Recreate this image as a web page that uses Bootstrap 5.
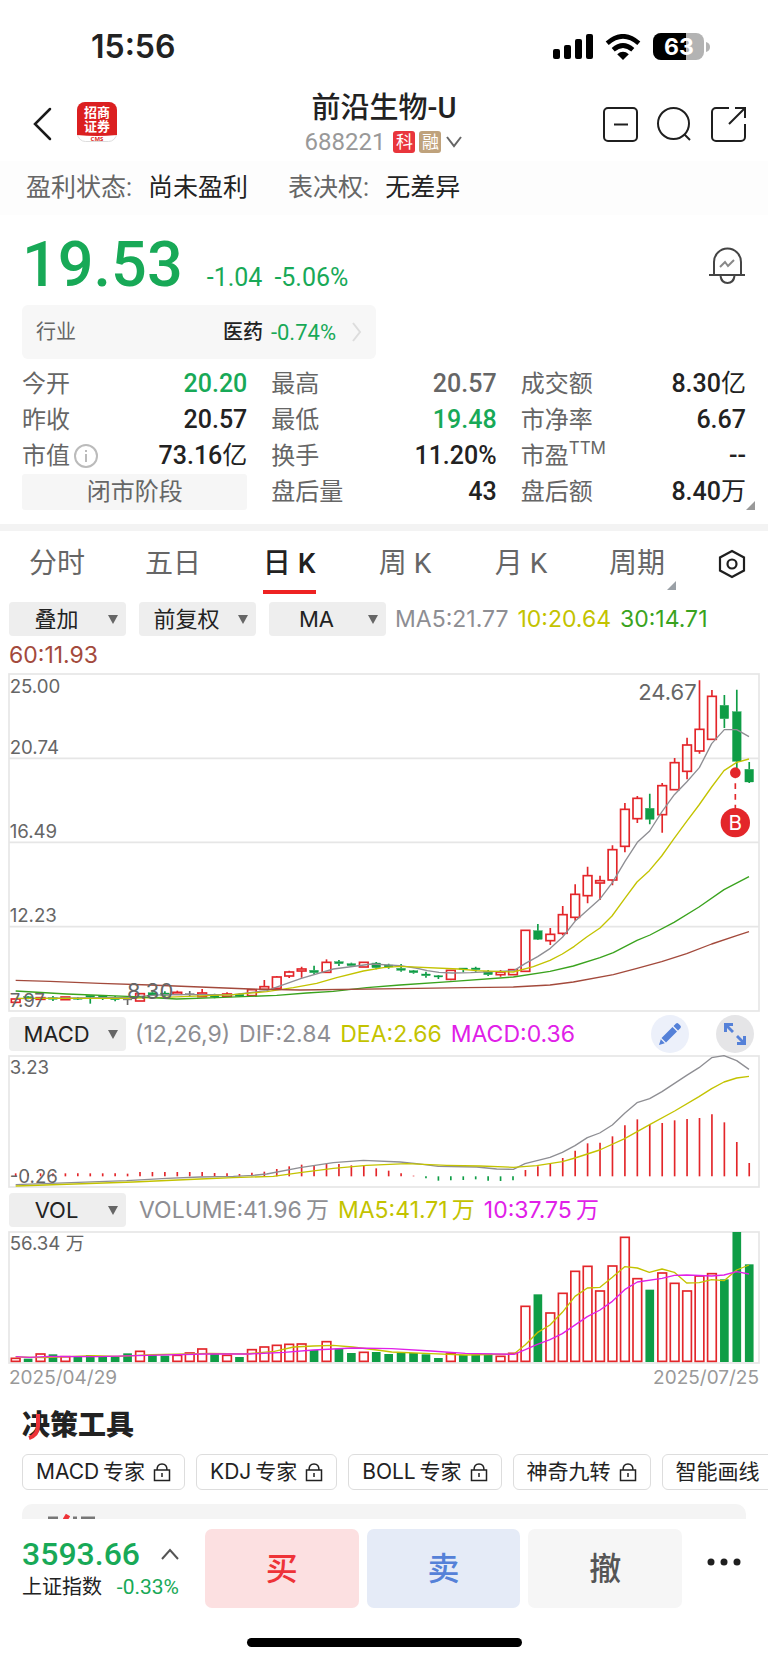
<!DOCTYPE html>
<html lang="zh-CN">
<head>
<meta charset="utf-8">
<meta name="viewport" content="width=device-width, initial-scale=1">
<title>前沿生物-U 688221</title>
<link href="https://cdn.jsdelivr.net/npm/bootstrap@5.3.0/dist/css/bootstrap.min.css" rel="stylesheet">
<style>
  :root { --up:#e3262a; --down:#0f9d46; --fall:#18a957; --ink:#222; --dim:#666; --soft:#999; --avg5:#8e8e93; --avg10:#c3c300; --avg30:#3aa31e; --avg60:#a34a3c; --pink:#e020e8; }
  body { font-family:Roboto,"Noto Sans CJK SC",sans-serif; color:var(--ink); background:#fff; overflow-x:hidden; }
  .btn-plain { background:none; border:0; padding:0; color:inherit; line-height:0; }
  .c-fall { color:var(--fall); } .c-dim { color:var(--dim); } .c-soft { color:var(--soft); }
  .fig { font-family:Inter,"Noto Sans CJK SC",sans-serif; }
  .side-pad { padding-left:22px; padding-right:22px; }

  .statusbar { height:87px; padding:6px 57px 0 91px; }
  .status-icons { gap:12px; }
  .clock { font:600 32px/40px Inter,sans-serif; }
  .topbar { height:74px; }
  .topside { flex:1; }
  .topside .brand { margin:-4px 0 0 21px; }
  .topside.actions { gap:18px; }
  .stock-name { font-size:29px; line-height:34px; font-weight:500; margin:0; padding-top:1px; }
  .stock-code { font-size:24px; line-height:34px; }
  .tag { width:22px; height:22px; line-height:22px; font-size:17px; border-radius:3px; color:#fff; text-align:center; }
  .tag-star { background:#e9353c; } .tag-margin { background:#bfa27c; }
  .notice { font-size:25px; line-height:54px; padding:0 26px; gap:40px; background:#fdfdfd; }
  .notice dt { font-weight:400; color:var(--dim); margin-right:16px; } .notice dd { margin:0; }

  .quote { padding-top:18px; padding-bottom:8px; }
  .price { font-size:63px; line-height:64px; font-weight:500; }
  .delta { font-size:25px; }
  .delta + .delta { margin-left:12px; }
  .sector { width:354px; max-width:100%; height:54px; padding:0 14px; background:#f7f7f7; border-radius:6px; font-size:20px; color:inherit; text-decoration:none; }
  .sector .pct { font-size:22px; margin:0 12px 0 8px; }
  .stats { display:grid; grid-template-columns:repeat(3,1fr); grid-auto-rows:36px; column-gap:24px; margin:7px 0 14px; font-size:24px; line-height:36px; position:relative; }
  .stats dt { font-weight:400; color:var(--dim); } .stats dd { margin:0; font-weight:500; font-size:25px; line-height:36px; }
  .stats sup { font-size:17px; top:-10px; }
  .info-mark { vertical-align:-4px; }
  .phase { background:#f6f6f6; border-radius:3px; color:var(--dim); text-align:center; }
  .corner { position:absolute; right:-9px; bottom:0; }
  .divider { height:7px; background:#f3f3f3; }

  .period { display:grid; grid-template-columns:repeat(6,116fr) 72fr; height:70px; }
  .period a { font-size:28px; line-height:66px; color:var(--dim); text-decoration:none; text-align:center; position:relative; padding-right:2px; }
  .period a.active { color:var(--ink); font-weight:500; }
  .period a.active::after { content:""; position:absolute; left:50%; bottom:7px; width:53px; height:4px; margin-left:-27px; background:#ee2222; }
  .period .more { position:absolute; right:20px; bottom:11px; }
  .period button { display:grid; place-items:center; }

  .charts { padding:0 9px; }
  .legendrow { column-gap:9px; font-size:23px; line-height:36px; }
  .pick { width:117px; height:34px; border:0; border-radius:4px; font-size:22px; line-height:34px; padding:0 22px 0 0; color:var(--ink); text-align-last:center; appearance:none;
    background:#eee url("data:image/svg+xml,%3Csvg xmlns='http://www.w3.org/2000/svg' width='10' height='9'%3E%3Cpath d='M0 0h10L5 9z' fill='%23666'/%3E%3C/svg%3E") no-repeat right 8px center; }
  .tint5 { color:var(--avg5); } .tint10 { color:var(--avg10); } .tint30 { color:var(--avg30); } .tint60 { color:var(--avg60); } .tintp { color:var(--pink); }
  .indrow { min-height:34px; line-height:34px; margin:6px 0 5px; }
  .plot { display:block; width:100%; height:auto; overflow:visible; font-family:Inter,"Noto Sans CJK SC",sans-serif; font-size:56px; fill:#666; }
  .plot-main { margin-top:1px; }
  .frame { fill:none; stroke:#e6e6e6; stroke-width:5; }
  .crv { fill:none; stroke-width:4; stroke-linejoin:round; }
  .round-tool { width:38px; height:38px; border-radius:50%; border:0; padding:0; display:grid; place-items:center; margin:-2px 0; }
  .tool-draw { background:#ecf0fa; margin-left:auto; margin-right:18px; } .tool-full { background:#e5e5e7; margin-right:5px; }
  .dates { font-size:19px; line-height:30px; }

  .tools-title { font-size:28px; line-height:34px; font-weight:900; margin:16px 0 11px; position:relative; }
  .tools-title svg { position:absolute; left:0; top:0; }
  .toolrow { overflow:hidden; gap:11px; padding-left:22px; }
  .tool { flex:none; height:36px; border:1px solid #ddd; border-radius:6px; background:#fff; padding:0 13px; font-size:21px; line-height:32px; color:var(--ink); display:flex; align-items:center; gap:8px; }
  .peek { height:15px; margin:14px 22px 0; background:#f4f4f4; border-radius:10px 10px 0 0; overflow:hidden; }

  .tradebar { padding:10px 22px 15px; }
  .index-val { font-size:32px; line-height:38px; }
  .index-name { font-size:20px; line-height:28px; white-space:nowrap; }
  .index-name .c-fall { font-size:21px; }
  .index-box { width:183px; padding:6px 26px 0 0; }
  .deal { flex:1; height:79px; border:0; border-radius:7px; font-size:32px; font-weight:500; }
  .deal-buy { background:#fce0e1; color:#ee3338; } .deal-sell { background:#e5ebf7; color:#5581d8; } .deal-undo { background:#f6f6f6; color:#555; }
  .more-btn { width:64px; padding:0 0 14px 20px; }
  .homebar { width:275px; height:9px; border-radius:5px; background:#000; margin:30px auto 0; }
</style>
</head>
<body>
<header>
  <div class="statusbar d-flex align-items-center justify-content-between">
    <span class="clock">15:56</span>
    <span class="status-icons d-flex align-items-center">
      <svg width="40" height="26" viewBox="0 0 40 26" aria-hidden="true"><rect x="0" y="15" width="7" height="10" rx="2"/><rect x="11" y="11" width="7" height="14" rx="2"/><rect x="22" y="5" width="7" height="20" rx="2"/><rect x="33" y="0" width="7" height="25" rx="2"/></svg>
      <svg width="36" height="26" viewBox="0 0 36 26" aria-hidden="true"><g fill="none" stroke="#000" stroke-width="4.600"><path d="M2.200 9.200Q18-4.600 33.800 9.200"/><path d="M8.200 15.800Q18 7.200 27.800 15.800"/></g><path d="M12.200 20.200Q18 15.400 23.800 20.200L18 26z"/></svg>
      <svg width="58" height="28" viewBox="0 0 58 28" aria-label="63%"><defs><clipPath id="cell"><rect width="51" height="27" rx="8"/></clipPath></defs><g clip-path="url(#cell)"><rect width="51" height="27" fill="#b3b3b3"/><rect width="33" height="27"/></g><path d="M53 9q4 1 4 5t-4 5z" fill="#b3b3b3"/><text x="26" y="22" text-anchor="middle" fill="#fff" font-family="Inter" font-weight="700" font-size="23">63</text></svg>
    </span>
  </div>
  <div class="topbar side-pad d-flex align-items-center">
    <div class="topside d-flex align-items-center">
      <button class="btn-plain" type="button" aria-label="返回"><svg width="34" height="34" viewBox="0 0 34 34" fill="none" stroke="#1a1a1a" stroke-width="2.500" stroke-linecap="round"><path d="M28 2 13 17l15 15"/></svg></button>
      <svg class="brand" width="40" height="40" viewBox="0 0 40 40" aria-label="招商证券"><rect x=".5" y=".5" width="39" height="39" rx="8" fill="#fff" stroke="#ddd"/><path d="M0 33V8a8 8 0 0 1 8-8h24a8 8 0 0 1 8 8v25q-20 2-40 0z" fill="#db1f20"/><g fill="#fff" text-anchor="middle" font-family="Noto Sans CJK SC" font-weight="700" font-size="13"><text x="20" y="15">招商</text><text x="20" y="29">证券</text></g><text x="20" y="39" fill="#db1f20" text-anchor="middle" font-family="Open Sans" font-weight="700" font-size="6">CMS</text></svg>
    </div>
    <div class="text-center">
      <h1 class="stock-name">前沿生物-U</h1>
      <div class="stock-code c-soft d-flex align-items-center justify-content-center">688221<span class="tag tag-star ms-2">科</span><span class="tag tag-margin ms-1">融</span><svg class="ms-1" width="18" height="14" viewBox="0 0 18 14" fill="none" stroke="#666" stroke-width="2"><path d="m2 2 7 9 7-9"/></svg></div>
    </div>
    <div class="topside actions d-flex justify-content-end">
      <button class="btn-plain" type="button" aria-label="移除自选"><svg width="36" height="36" viewBox="0 0 36 36" fill="none" stroke="#1f1f1f" stroke-width="2"><rect x="2" y="2" width="33" height="33" rx="4"/><path d="M12 18.500h14"/></svg></button>
      <button class="btn-plain" type="button" aria-label="搜索"><svg width="36" height="36" viewBox="0 0 36 36" fill="none" stroke="#1f1f1f" stroke-width="2"><circle cx="17.500" cy="17.500" r="15.500"/><path d="m28.500 28.500 5.500 5.500"/></svg></button>
      <button class="btn-plain" type="button" aria-label="分享"><svg width="36" height="36" viewBox="0 0 36 36" fill="none" stroke="#1f1f1f" stroke-width="2"><path d="M19 2H6a4 4 0 0 0-4 4v25a4 4 0 0 0 4 4h25a4 4 0 0 0 4-4V18M25 2h10v10M35 2 19 18"/></svg></button>
    </div>
  </div>
  <dl class="notice d-flex mb-0">
    <div class="d-flex"><dt>盈利状态:</dt><dd>尚未盈利</dd></div>
    <div class="d-flex"><dt>表决权:</dt><dd>无差异</dd></div>
  </dl>
</header>

<main>
  <section class="side-pad">
    <div class="quote d-flex align-items-center justify-content-between">
      <div class="d-flex align-items-baseline c-fall"><span class="price">19.53</span><span class="delta ms-4">-1.04</span><span class="delta">-5.06%</span></div>
      <button class="btn-plain" type="button" aria-label="提醒"><svg width="38" height="38" viewBox="0 0 38 38" fill="none" stroke="#444" stroke-width="2"><path d="M6 28V16a13 13 0 0 1 27 0v12M1 29h36M12.500 30q1 7 7 7t7-7"/><path d="m12 21 5-5 3 4 6-6" stroke="#888"/></svg></button>
    </div>
    <a href="#sector" class="sector d-flex align-items-center"><span class="c-dim me-auto">行业</span><span class="fw-medium">医药</span><span class="pct c-fall">-0.74%</span><svg width="14" height="20" viewBox="0 0 14 20" fill="none" stroke="#ddd" stroke-width="2"><path d="m5 1 7 9-7 9"/></svg></a>
    <dl class="stats">
      <div class="d-flex justify-content-between"><dt>今开</dt><dd class="c-fall">20.20</dd></div>
      <div class="d-flex justify-content-between"><dt>最高</dt><dd class="c-dim">20.57</dd></div>
      <div class="d-flex justify-content-between"><dt>成交额</dt><dd>8.30<span class="fw-normal">亿</span></dd></div>
      <div class="d-flex justify-content-between"><dt>昨收</dt><dd>20.57</dd></div>
      <div class="d-flex justify-content-between"><dt>最低</dt><dd class="c-fall">19.48</dd></div>
      <div class="d-flex justify-content-between"><dt>市净率</dt><dd>6.67</dd></div>
      <div class="d-flex justify-content-between"><dt>市值<svg class="info-mark ms-1" width="24" height="24" viewBox="0 0 24 24" fill="none" stroke="#bbb" stroke-width="2"><circle cx="12" cy="12" r="11"/><path d="M12 10v8M12 6v2"/></svg></dt><dd>73.16<span class="fw-normal">亿</span></dd></div>
      <div class="d-flex justify-content-between"><dt>换手</dt><dd>11.20%</dd></div>
      <div class="d-flex justify-content-between"><dt>市盈<sup class="fig">TTM</sup></dt><dd>--</dd></div>
      <div class="phase">闭市阶段</div>
      <div class="d-flex justify-content-between"><dt>盘后量</dt><dd>43</dd></div>
      <div class="d-flex justify-content-between"><dt>盘后额</dt><dd>8.40<span class="fw-normal">万</span></dd></div>
      <svg class="corner" width="9" height="9" aria-hidden="true"><path d="M9 0v9H0z" fill="#999"/></svg>
    </dl>
  </section>
  <div class="divider"></div>

  <nav class="period">
    <a href="#min">分时</a><a href="#d5">五日</a><a href="#day" class="active">日 K</a><a href="#week">周 K</a><a href="#month">月 K</a>
    <a href="#cycle">周期<svg class="more" width="9" height="9" aria-hidden="true"><path d="M9 0v9H0z" fill="#9aa0a6"/></svg></a>
    <button type="button" class="btn-plain pb-1" aria-label="图表设置"><svg width="28" height="30" viewBox="0 0 28 30" fill="none" stroke="#1f1f1f" stroke-width="2.200"><path d="M14 2 26 8.500v13L14 28 2 21.500v-13z"/><circle cx="14" cy="15" r="4.500"/></svg></button>
  </nav>

  <section class="charts">
    <div class="legendrow fig d-flex flex-wrap align-items-center">
      <select class="pick me-1" aria-label="叠加"><option>叠加</option></select>
      <select class="pick me-1" aria-label="复权"><option>前复权</option></select>
      <select class="pick" aria-label="均线"><option>MA</option></select>
      <span class="tint5">MA5:21.77</span><span class="tint10">10:20.64</span><span class="tint30">30:14.71</span><span class="tint60">60:11.93</span>
    </div>
    <svg class="plot plot-main" id="kline" viewBox="0 42 2250 1011" role="img" aria-label="日K线图">
      <rect class="frame" x="0" y="42" width="2250" height="1011"/>
      <path class="frame" d="M0 295h2250M0 547h2250M0 800h2250"/>
    </svg>

    <div class="legendrow indrow fig d-flex align-items-center">
      <select class="pick" aria-label="指标一"><option>MACD</option></select>
      <span class="tint5">(12,26,9)</span><span class="tint5">DIF:2.84</span><span class="tint10">DEA:2.66</span><span class="tintp">MACD:0.36</span>
      <button type="button" class="round-tool tool-draw" aria-label="画线"><svg width="24" height="24" viewBox="0 0 24 24" fill="#5581d8"><path d="M15.500 4 18 1.500q1.200-1 2.500.2l1.800 1.800q1.200 1.300.2 2.500L20 8.500zM14.500 5l4.500 4.500L8 20.500 3.500 16zM2.800 17.200 6.800 21.200 1 23z"/></svg></button>
      <button type="button" class="round-tool tool-full" aria-label="全屏"><svg width="24" height="24" viewBox="0 0 24 24" fill="#5581d8"><path d="M1 1h9v3H6l5 5-2 2-5-5v4H1zM23 23h-9v-3h4l-5-5 2-2 5 5v-4h3z"/></svg></button>
    </div>
    <svg class="plot" id="macd" viewBox="0 0 2250 393" role="img" aria-label="MACD">
      <rect class="frame" width="2250" height="393"/>
    </svg>

    <div class="legendrow indrow fig d-flex align-items-center">
      <select class="pick" aria-label="指标二"><option>VOL</option></select>
      <span class="tint5 ms-1">VOLUME:41.96&#8201;万</span><span class="tint10">MA5:41.71&#8201;万</span><span class="tintp">10:37.75&#8201;万</span>
    </div>
    <svg class="plot" id="vol" viewBox="0 0 2250 393" role="img" aria-label="成交量">
      <rect class="frame" width="2250" height="393"/>
    </svg>
    <div class="dates fig c-soft d-flex justify-content-between"><span>2025/04/29</span><span>2025/07/25</span></div>
  </section>

  <section>
    <div class="side-pad"><h2 class="tools-title">决策工具<svg width="28" height="34" viewBox="0 0 28 34" fill="none" stroke="#ee3338" stroke-width="4" aria-hidden="true"><path d="M16 5v12q0 9-9 12"/></svg></h2></div>
    <div class="toolrow d-flex" id="tools"></div>
    <div class="peek"><svg class="d-block" width="80" height="15" aria-hidden="true"><path d="M26 14h10M51 14h4M59 14h14" stroke="#777" stroke-width="3"/><path d="M43 16 46 11" stroke="#ee3338" stroke-width="5"/></svg></div>
  </section>
</main>

<footer class="tradebar">
  <div class="d-flex">
    <a href="#index" class="index-box text-reset text-decoration-none">
      <span class="d-flex justify-content-between align-items-center"><span class="index-val c-fall fw-medium">3593.66</span><svg width="18" height="12" viewBox="0 0 18 12" fill="none" stroke="#555" stroke-width="2"><path d="m1 11 8-9 8 9"/></svg></span>
      <span class="index-name d-flex justify-content-between">上证指数<span class="c-fall">-0.33%</span></span>
    </a>
    <div class="d-flex flex-grow-1 gap-2">
      <button type="button" class="deal deal-buy">买</button><button type="button" class="deal deal-sell">卖</button><button type="button" class="deal deal-undo">撤</button>
    </div>
    <button type="button" class="btn-plain more-btn" aria-label="更多"><svg width="34" height="8" viewBox="0 0 34 8" fill="#1f1f1f"><circle cx="4" cy="4" r="3.500"/><circle cx="17" cy="4" r="3.500"/><circle cx="30" cy="4" r="3.500"/></svg></button>
  </div>
  <div class="homebar"></div>
</footer>

<script src="https://cdn.jsdelivr.net/npm/bootstrap@5.3.0/dist/js/bootstrap.bundle.min.js"></script>
<script>
const UP = '#e3262a', DOWN = '#0f9d46', FLAT = '#666';
const cx = i => 20 + i * 37.3;
const crv = (color, pts) => `<polyline class="crv" stroke="${color}" points="${pts}"/>`;
const add = (id, s) => document.getElementById(id).insertAdjacentHTML('beforeend', s);

// candle: direction, body top, body bottom, high, low
const candles = `r 1017 1027 1015 1030|g 1010 1016 1008 1018|r 1013 1018 1011 1020|g 1013 1018 1008 1023|r 1011 1019 1011 1019|g 1014 1018 1012 1020|g 1006 1011 1006 1031|g 1007 1013 1005 1020|g 1014 1019 1008 1024|f 1018 1020 1012 1035
r 1001 1023 1001 1023|g 998 1006 994 1006|g 999 1006 994 1012|r 997 1003 992 1003|f 1001 1004 993 1009|r 999 1010 987 1010|g 1006 1011 1001 1015|r 1002 1009 997 1009|g 1003 1009 1000 1011|r 989 1007 989 1007
r 980 988 960 988|r 951 985 948 985|r 936 948 932 954|r 927 933 920 953|g 931 938 917 943|r 907 937 898 937|g 905 911 900 918|g 911 917 908 917|r 907 921 907 921|g 909 923 906 928
g 915 921 911 926|g 925 931 912 935|g 932 938 930 941|g 942 947 935 953|g 947 951 945 957|r 931 958 931 961|g 924 929 924 937|g 924 929 920 935|g 935 944 930 948|r 936 944 930 950
r 929 944 929 944|r 811 934 811 934|g 812 838 792 840|r 823 842 804 855|r 764 820 738 826|r 703 772 673 782|r 647 707 620 730|r 662 669 647 720|r 569 660 556 676|r 448 559 429 577
r 415 476 408 489|g 445 478 401 493|r 377 464 369 518|r 308 389 294 389|r 255 334 233 358|r 208 273 61 281|r 109 238 90 238|g 136 176 105 204|g 155 304 89 325|g 328 366 306 369`.split(/[|\n]/).map(s => s.split(' '));
let k = '';
candles.forEach(([d, t, b, h, l], i) => {
  const x = cx(i), c = d === 'r' ? UP : d === 'g' ? DOWN : FLAT;
  k += `<path d="M${x} ${h}V${t}M${x} ${b}V${l}" stroke="${c}" stroke-width="5"/>`;
  k += `<rect x="${x - 13}" y="${t}" width="26" height="${b - t}" fill="${d === 'r' ? 'none' : c}" stroke="${c}" stroke-width="${d === 'r' ? 5 : 1}"/>`;
});
k += crv('#8e8e93', '20,1016 353,1012 463,1004 673,1004 773,992 877,955 973,927 1088,912 1173,917 1220,924 1255,932 1290,937 1330,939 1385,938 1450,935 1515,932 1548,911 1586,890 1624,865 1661,831 1698,784 1735,751 1772,718 1810,668 1848,604 1885,547 1922,513 1959,455 1996,404 2033,366 2071,323 2108,251 2146,209 2183,209 2220,230');
k += crv('#c3c300', '20,1015 353,1015 463,1012 673,1004 773,995 853,983 923,970 983,953 1063,933 1123,923 1173,919 1348,927 1403,932 1513,936 1573,920 1623,901 1660,882 1696,859 1733,831 1773,804 1809,768 1847,716 1884,666 1921,632 1958,588 1995,536 2033,484 2070,435 2108,381 2145,332 2183,307 2220,297');
k += crv('#3aa31e', '20,993 173,1002 373,1010 503,1017 623,1013 803,1006 893,999 973,994 1073,983 1173,975 1323,965 1513,951 1623,934 1693,918 1773,893 1813,878 1884,841 1923,825 1995,787 2070,741 2145,689 2220,650');
k += crv('#a34a3c', '20,961 123,964 273,970 423,975 573,981 723,987 873,990 1173,986 1373,983 1513,981 1623,975 1693,966 1813,944 1884,925 1958,905 2033,881 2108,852 2183,827 2220,815');
[['25.00', 98], ['20.74', 281], ['16.49', 533], ['12.23', 785], ['7.97', 1042]].forEach(([t, y]) => k += `<text x="2" y="${y}">${t}</text>`);
k += '<text x="354" y="1017" font-size="66">8.30</text><text x="2063" y="120" font-size="66" text-anchor="end">24.67</text>';
k += '<path d="M2179 338V445" stroke="#e3262a" stroke-width="5" stroke-dasharray="17 15"/><circle cx="2179" cy="338" r="16" fill="#e3262a"/><circle cx="2179" cy="488" r="44" fill="#e3262a"/><text x="2179" y="511" fill="#fff" font-size="62" text-anchor="middle">B</text>';
add('kline', k);

const hist = [9,9,9,9,9,9,9,9,9,8,13,13,13,13,13,13,10,9,7,11,14,22,30,35,34,38,37,33,31,24,17,9,2,-6,-13,-12,-11,-9,-13,-14,-12,19,30,38,55,77,99,101,120,153,171,156,160,168,172,175,186,162,103,40];
let m = hist.map((v, i) => `<path d="M${cx(i)} 361v${-v}" stroke="${v > 0 ? UP : DOWN}" stroke-width="5"/>`).join('');
m += crv('#8e8e93', '20,386 353,374 473,367 573,363 673,361 733,358 773,354 873,335 973,320 1063,313 1173,318 1223,323 1288,331 1403,333 1463,339 1513,340 1548,323 1623,304 1660,289 1698,269 1735,245 1772,231 1810,207 1847,172 1884,140 1922,128 1959,107 2033,58 2070,35 2108,5 2145,-1 2183,14 2220,40');
m += crv('#c3c300', '20,390 373,378 573,369 673,365 793,361 873,350 973,337 1073,328 1193,323 1313,328 1413,330 1513,334 1583,329 1660,317 1698,306 1772,282 1847,248 1922,206 1997,165 2070,122 2108,98 2145,78 2183,66 2220,61');
m += '<text x="2" y="55">3.23</text><text x="2" y="380">-0.26</text>';
add('macd', m);

const volTop = [379,380,366,367,374,372,369,374,375,364,358,369,371,370,363,351,365,370,375,353,345,340,337,336,354,329,350,363,361,360,366,361,363,367,378,364,369,367,365,373,364,223,187,243,184,118,103,177,102,16,140,173,123,154,177,132,125,142,0,97];
const volDir = 'rgrgrggggg rggrrrgrgr rrrrgrggrg gggggrgggr rrgrrrrrrr rgrrrrrggg'.replace(/ /g, '');
let v = volTop.map((t, i) => volDir[i] === 'r'
  ? `<rect x="${cx(i) - 13}" y="${t}" width="26" height="${388 - t}" fill="none" stroke="${UP}" stroke-width="5"/>`
  : `<rect x="${cx(i) - 13}" y="${t}" width="26" height="${390 - t}" fill="${DOWN}"/>`).join('');
v += crv('#c3c300', '20,375 105,377 252,371 326,373 428,368 605,364 708,366 796,358 854,345 913,342 972,340 1031,345 1104,354 1148,360 1266,365 1369,369 1515,366 1549,338 1585,302 1623,279 1660,241 1698,193 1735,168 1773,166 1810,136 1847,104 1885,108 1921,121 1959,111 1996,121 2033,153 2071,152 2108,143 2145,146 2183,114 2220,99');
v += crv('#e020e8', '20,374 61,376 120,373 267,374 414,370 590,366 722,366 825,361 913,354 1031,348 1148,350 1266,357 1369,364 1515,367 1549,353 1585,337 1623,323 1660,305 1735,254 1773,234 1810,208 1847,173 1885,150 1959,139 1996,130 2033,129 2108,132 2145,129 2183,119 2220,126');
v += '<text x="2" y="55">56.34 万</text>';
add('vol', v);

const lock = '<svg width="18" height="20" viewBox="0 0 18 20" fill="none" stroke="#222" stroke-width="1.500" aria-hidden="true"><path d="M1.500 8h15v10.500h-15zM4 8q0-6 5-6t5 6M9 11v4"/></svg>';
['MACD\u2009专家', 'KDJ\u2009专家', 'BOLL\u2009专家', '神奇九转', '智能画线'].forEach(t => add('tools', `<button type="button" class="tool fig">${t}${lock}</button>`));
</script>
</body>
</html>
